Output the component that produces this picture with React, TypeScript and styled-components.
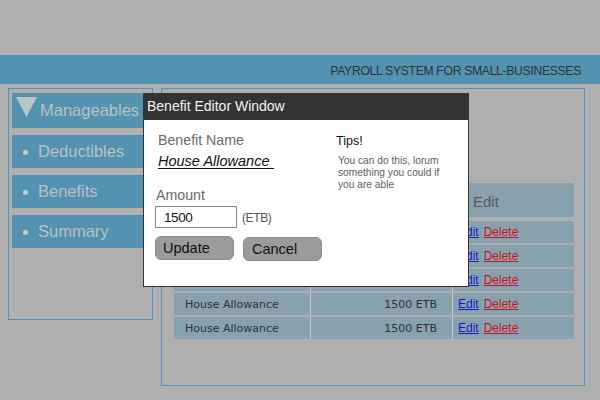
import React from "react";
import styled, { createGlobalStyle } from "styled-components";

const Global = createGlobalStyle`
  html, body { margin: 0; padding: 0; }
  body {
    width: 600px;
    height: 400px;
    overflow: hidden;
    background: #afafaf;
    font-family: "Liberation Sans", Arial, sans-serif;
  }
`;

const Page = styled.div`
  position: relative;
  width: 600px;
  height: 400px;
  display: flex;
  flex-direction: column;
  padding-top: 55px;
  box-sizing: border-box;
`;

const HeaderBar = styled.header`
  height: 29px;
  background: #5392b0;
  display: flex;
  align-items: center;
  justify-content: flex-end;
  padding-right: 19px;
  padding-top: 2px;
  box-sizing: border-box;
  color: #2f3438;
  font-size: 12.2px;
  letter-spacing: -0.32px;
`;

const Body = styled.div`
  display: flex;
  align-items: flex-start;
  gap: 8px;
  padding: 4px 0 0 8px;
`;

const Sidebar = styled.nav`
  width: 145px;
  height: 232px;
  box-sizing: border-box;
  border: 1px solid #5392b0;
  padding: 4px 2px 0 3px;
  display: flex;
  flex-direction: column;
  gap: 7px;
`;

const MenuItem = styled.div<{ $first?: boolean }>`
  height: ${(p) => (p.$first ? 35 : 33)}px;
  background: #5392b0;
  display: flex;
  align-items: center;
  color: #bcc0c2;
  font-size: 16.5px;
  padding-left: ${(p) => (p.$first ? 4 : 11)}px;
  gap: ${(p) => (p.$first ? 3 : 10)}px;
  box-sizing: border-box;
`;

const Bullet = styled.span`
  width: 5px;
  height: 5px;
  border-radius: 50%;
  background: #c6c9ca;
  flex: none;
  margin-top: 2px;
`;

const TriangleBox = styled.span`
  display: flex;
  align-self: flex-start;
  margin-top: 4px;
`;

const Main = styled.main`
  width: 424px;
  height: 298px;
  box-sizing: border-box;
  border: 1px solid #5392b0;
  padding: 94px 0 0 12px;
`;

const Table = styled.div`
  width: 400px;
  display: flex;
  flex-direction: column;
  gap: 2px;
`;

const HeadRow = styled.div`
  height: 34px;
  background: #87a1ae;
  display: grid;
  grid-template-columns: 136px 142px 122px;
  align-items: center;
  margin-bottom: 2px;
  color: #555b5f;
  font-size: 15px;
`;

const HeadCell = styled.div<{ $pad: number }>`
  padding-left: ${(p) => p.$pad}px;
  padding-top: 2px;
`;

const Row = styled.div`
  height: 22px;
  background: #87a1ae;
  display: grid;
  grid-template-columns: 136px 142px 122px;
`;

const Cell = styled.div<{ $align?: "left" | "right"; $border?: boolean }>`
  display: flex;
  align-items: center;
  justify-content: ${(p) => (p.$align === "right" ? "flex-end" : "flex-start")};
  border-left: ${(p) => (p.$border ? "1px solid #c3cace" : "none")};
  font-family: "DejaVu Sans", Verdana, sans-serif;
  font-size: 11px;
  color: #2e3336;
  padding: 0 15px 0 11px;
  box-sizing: border-box;
`;

const ActionCell = styled.div`
  display: flex;
  align-items: center;
  gap: 5px;
  border-left: 1px solid #c3cace;
  padding-left: 5px;
  font-size: 12px;
`;

const Link = styled.a<{ $danger?: boolean }>`
  color: ${(p) => (p.$danger ? "#c8141e" : "#1818c8")};
  text-decoration: underline;
  cursor: pointer;
`;

const Dialog = styled.div`
  position: absolute;
  left: 143px;
  top: 93px;
  width: 326px;
  display: flex;
  flex-direction: column;
`;

const TitleBar = styled.div`
  height: 27px;
  background: #333333;
  color: #f4f4f4;
  font-size: 14px;
  display: flex;
  align-items: center;
  padding-left: 4px;
  padding-bottom: 1px;
  box-sizing: border-box;
`;

const DialogBody = styled.div`
  height: 167px;
  background: #ffffff;
  border: 1px solid #333333;
  border-top: none;
  box-sizing: border-box;
  display: grid;
  grid-template-columns: 181px 1fr;
  padding: 11px 0 0 11px;
`;

const LeftCol = styled.div`
  display: flex;
  flex-direction: column;
  align-items: flex-start;
`;

const FieldLabel = styled.div<{ $indent?: number; $top?: number }>`
  color: #6a6a6a;
  font-size: 14.2px;
  line-height: 18px;
  margin-left: ${(p) => p.$indent ?? 0}px;
  margin-top: ${(p) => p.$top ?? 0}px;
`;

const NameValue = styled.div`
  margin: 5px 0 0 3px;
  width: 116px;
  font-style: italic;
  font-size: 14.5px;
  line-height: 14px;
  color: #111;
  border-bottom: 1px solid #111;
`;

const AmountRow = styled.div`
  display: flex;
  align-items: center;
  gap: 5px;
  margin-top: 2px;
`;

const AmountInput = styled.div`
  width: 82px;
  height: 22px;
  box-sizing: border-box;
  border: 1px solid #8a8a8a;
  font-size: 13.5px;
  color: #111;
  display: flex;
  align-items: center;
  padding-left: 8px;
  letter-spacing: -0.4px;
`;

const Unit = styled.span`
  color: #555;
  font-size: 12px;
  letter-spacing: -0.4px;
  margin-top: 1px;
`;

const ButtonRow = styled.div`
  display: flex;
  gap: 9px;
  margin-top: 8px;
`;

const Button = styled.button<{ $shift?: number }>`
  width: 79px;
  height: 24px;
  margin-top: ${(p) => p.$shift ?? 0}px;
  box-sizing: border-box;
  border: 1px solid #8c8c8c;
  border-radius: 6px;
  background: #9b9b9b;
  color: #111;
  font-family: "Liberation Sans", Arial, sans-serif;
  font-size: 14.5px;
  text-align: left;
  padding: 0 0 0 ${(p) => 7 + (p.$shift ?? 0)}px;
`;

const TipsCol = styled.div`
  display: flex;
  flex-direction: column;
  padding-top: 2px;
`;

const TipsTitle = styled.div`
  font-size: 12.5px;
  color: #111;
  line-height: 16px;
`;

const TipsText = styled.div`
  margin-top: 6px;
  margin-left: 2px;
  font-size: 10.2px;
  line-height: 12px;
  color: #5e5e5e;
  width: 115px;
`;

const Triangle = () => (
  <svg width="21" height="20" viewBox="0 0 21 20">
    <polygon points="0,0 21,0 10.5,20" fill="#b9c3c9" />
  </svg>
);

const rows = [1, 2, 3, 4, 5];

export default function App() {
  return (
    <>
      <Global />
      <Page>
        <HeaderBar>PAYROLL SYSTEM FOR SMALL-BUSINESSES</HeaderBar>
        <Body>
          <Sidebar>
            <MenuItem $first>
              <TriangleBox>
                <Triangle />
              </TriangleBox>
              Manageables
            </MenuItem>
            <MenuItem>
              <Bullet />
              Deductibles
            </MenuItem>
            <MenuItem>
              <Bullet />
              Benefits
            </MenuItem>
            <MenuItem>
              <Bullet />
              Summary
            </MenuItem>
          </Sidebar>
          <Main>
            <Table>
              <HeadRow>
                <HeadCell $pad={11}>Benefit</HeadCell>
                <HeadCell $pad={60}>Amount</HeadCell>
                <HeadCell $pad={21}>Edit</HeadCell>
              </HeadRow>
              {rows.map((r) => (
                <Row key={r}>
                  <Cell>House Allowance</Cell>
                  <Cell $align="right" $border>
                    1500 ETB
                  </Cell>
                  <ActionCell>
                    <Link>Edit</Link>
                    <Link $danger>Delete</Link>
                  </ActionCell>
                </Row>
              ))}
            </Table>
          </Main>
        </Body>
        <Dialog>
          <TitleBar>Benefit Editor Window</TitleBar>
          <DialogBody>
            <LeftCol>
              <FieldLabel $indent={3}>Benefit Name</FieldLabel>
              <NameValue>House Allowance</NameValue>
              <FieldLabel $indent={1} $top={17}>
                Amount
              </FieldLabel>
              <AmountRow>
                <AmountInput>1500</AmountInput>
                <Unit>(ETB)</Unit>
              </AmountRow>
              <ButtonRow>
                <Button>Update</Button>
                <Button $shift={1}>Cancel</Button>
              </ButtonRow>
            </LeftCol>
            <TipsCol>
              <TipsTitle>Tips!</TipsTitle>
              <TipsText>
                You can do this, lorum something you could if you are able
              </TipsText>
            </TipsCol>
          </DialogBody>
        </Dialog>
      </Page>
    </>
  );
}
